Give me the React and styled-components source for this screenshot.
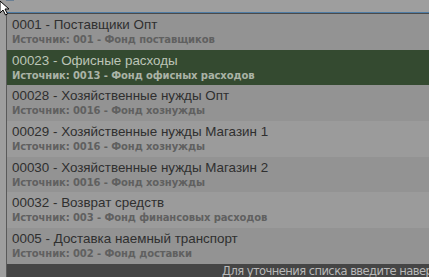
import React from "react";
import styled, { createGlobalStyle } from "styled-components";

const Global = createGlobalStyle`
  html, body { margin: 0; padding: 0; background: #9e9e9e; overflow: hidden; }
  body { width: 429px; height: 277px; font-family: "DejaVu Sans", Verdana, sans-serif; }
`;

const Page = styled.div`
  position: relative;
  width: 429px;
  height: 277px;
  padding: 12px 0 0 6px;
  box-sizing: border-box;
  display: flex;
  flex-direction: column;
`;

const Panel = styled.div`
  flex: 1;
  display: flex;
  flex-direction: column;
  border-left: 1px solid #5a5a5a;
  border-top: 1px solid #4f7ca4;
  box-shadow: inset 0 1px 0 #4a4a4a;
  padding-top: 1px;
  min-height: 0;
`;

const List = styled.div`
  display: flex;
  flex-direction: column;
`;

const Row = styled.div`
  height: 35.7px;
  box-sizing: border-box;
  padding: 3px 0 0 5px;
  background: ${(p) => (p.$selected ? "#344a30" : p.$alt ? "#9b9b9b" : "#939393")};
  display: flex;
  flex-direction: column;
  white-space: nowrap;
  overflow: hidden;
`;

const Title = styled.div`
  font-family: "Liberation Sans", Arial, sans-serif;
  font-size: 13.4px;
  line-height: 16px;
  color: ${(p) => (p.$selected ? "#bcc5b7" : "#2f2f2f")};
`;

const Sub = styled.div`
  font-size: 10px;
  line-height: 14px;
  font-weight: bold;
  letter-spacing: -0.1px;
  color: ${(p) => (p.$selected ? "#aab3a6" : "#606060")};
`;

const Footer = styled.div`
  flex: 1;
  background: #454545;
  color: #b9b9b9;
  font-size: 11.5px;
  line-height: 15px;
  letter-spacing: -0.55px;
  padding-left: 215px;
  white-space: nowrap;
  overflow: hidden;
`;

const Cursor = styled.svg`
  position: absolute;
  left: -1px;
  top: 0;
`;

const Mark = styled.div`
  position: absolute;
  left: 6px;
  top: 0;
  width: 8px;
  height: 5px;
  border-top: 1px solid #6a7f93;
  box-sizing: border-box;
`;

const items = [
  ["0001 - Поставщики Опт", "Источник: 001 - Фонд поставщиков"],
  ["00023 - Офисные расходы", "Источник: 0013 - Фонд офисных расходов"],
  ["00028 - Хозяйственные нужды Опт", "Источник: 0016 - Фонд хознужды"],
  ["00029 - Хозяйственные нужды Магазин 1", "Источник: 0016 - Фонд хознужды"],
  ["00030 - Хозяйственные нужды Магазин 2", "Источник: 0016 - Фонд хознужды"],
  ["00032 - Возврат средств", "Источник: 003 - Фонд финансовых расходов"],
  ["0005 - Доставка наемный транспорт", "Источник: 002 - Фонд доставки"],
];

export default function App() {
  return (
    <>
      <Global />
      <Page>
        <Panel>
          <List>
            {items.map(([t, s], i) => (
              <Row key={i} $selected={i === 1} $alt={i % 2 === 1}>
                <Title $selected={i === 1}>{t}</Title>
                <Sub $selected={i === 1}>{s}</Sub>
              </Row>
            ))}
          </List>
          <Footer>Для уточнения списка введите наверху часть названия</Footer>
        </Panel>
        <Mark />
        <Cursor width="14" height="16" viewBox="0 0 14 16">
          <path d="M1 1 L1 13 L4 10 L6.5 15 L8.5 14 L6 9 L10 9 Z" fill="#ffffff" stroke="#000" strokeWidth="1" />
        </Cursor>
      </Page>
    </>
  );
}
